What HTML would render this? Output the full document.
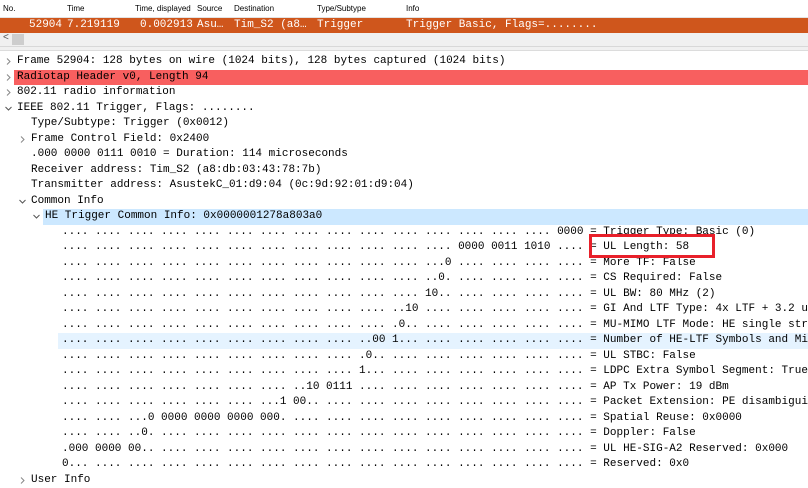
<!DOCTYPE html>
<html><head><meta charset="utf-8"><style>
body{margin:0;width:808px;height:488px;overflow:hidden;background:#fff;position:relative;font-family:"Liberation Mono",monospace;font-size:11px;color:#000}
.hdr{position:absolute;top:0;left:0;width:808px;height:17px;background:#fff;border-bottom:1px solid #e3e3e3;font-family:"Liberation Sans",sans-serif;font-size:8px}
.hdr span{position:absolute;top:4px}
.sel{position:absolute;top:18px;left:0;width:808px;height:15px;background:#cf561c;color:#fff;white-space:pre;line-height:15px}
.sel span{position:absolute;top:0}
.sb{position:absolute;top:33px;left:0;width:808px;height:13px;background:#f0f0f0;border-bottom:1px solid #d8d8d8}
.sep{position:absolute;top:47px;left:0;width:808px;height:3px;background:#f0f0f0;border-bottom:1px solid #dcdcdc}
.tree{position:absolute;top:54px;left:0;width:808px}
.r{position:relative;height:15.5px;line-height:15.5px;white-space:pre;overflow:hidden}
.a{position:absolute;top:4px;width:7px;height:7px}
.t{position:absolute;top:0}
.red{background:#f85f5f}
.blue{background:#cce8ff}
.hov{background:#e5f3ff}
.box{position:absolute;left:589px;top:234px;width:120px;height:18px;border:3px solid #e8202a}
</style></head><body>
<div class="hdr"><span style="left:3px">No.</span><span style="left:67px">Time</span><span style="left:135px">Time, displayed</span><span style="left:197px">Source</span><span style="left:234px">Destination</span><span style="left:317px">Type/Subtype</span><span style="left:406px">Info</span></div>
<div class="sel"><span style="left:29px">52904</span><span style="left:67px">7.219119</span><span style="left:140px">0.002913</span><span style="left:197px">Asu…</span><span style="left:234px">Tim_S2 (a8…</span><span style="left:317px">Trigger</span><span style="left:406px">Trigger Basic, Flags=........</span></div>
<div class="sb"><span style="position:absolute;left:3px;top:-1px;font-family:'Liberation Sans',sans-serif;font-size:10px;color:#555">&lt;</span><div style="position:absolute;left:12px;top:1px;width:12px;height:11px;background:#cdcdcd"></div></div>
<div class="sep"></div>
<div class="tree">
<div class="r"><svg class="a" style="left:5px" viewBox="0 0 7 7"><path d="M2 0.5L5 3.5L2 6.5" fill="none" stroke="#888" stroke-width="1"/></svg><span class="t" style="left:17px">Frame 52904: 128 bytes on wire (1024 bits), 128 bytes captured (1024 bits)</span></div>
<div class="r"><svg class="a" style="left:5px" viewBox="0 0 7 7"><path d="M2 0.5L5 3.5L2 6.5" fill="none" stroke="#888" stroke-width="1"/></svg><div class="red" style="position:absolute;left:14px;right:0;top:0;bottom:0"></div><span class="t" style="left:17px">Radiotap Header v0, Length 94</span></div>
<div class="r"><svg class="a" style="left:5px" viewBox="0 0 7 7"><path d="M2 0.5L5 3.5L2 6.5" fill="none" stroke="#888" stroke-width="1"/></svg><span class="t" style="left:17px">802.11 radio information</span></div>
<div class="r"><svg class="a" style="left:5px" viewBox="0 0 7 7"><path d="M0.5 2L3.5 5L6.5 2" fill="none" stroke="#555" stroke-width="1"/></svg><span class="t" style="left:17px">IEEE 802.11 Trigger, Flags: ........</span></div>
<div class="r"><span class="t" style="left:31px">Type/Subtype: Trigger (0x0012)</span></div>
<div class="r"><svg class="a" style="left:19px" viewBox="0 0 7 7"><path d="M2 0.5L5 3.5L2 6.5" fill="none" stroke="#888" stroke-width="1"/></svg><span class="t" style="left:31px">Frame Control Field: 0x2400</span></div>
<div class="r"><span class="t" style="left:31px">.000 0000 0111 0010 = Duration: 114 microseconds</span></div>
<div class="r"><span class="t" style="left:31px">Receiver address: Tim_S2 (a8:db:03:43:78:7b)</span></div>
<div class="r"><span class="t" style="left:31px">Transmitter address: AsustekC_01:d9:04 (0c:9d:92:01:d9:04)</span></div>
<div class="r"><svg class="a" style="left:19px" viewBox="0 0 7 7"><path d="M0.5 2L3.5 5L6.5 2" fill="none" stroke="#555" stroke-width="1"/></svg><span class="t" style="left:31px">Common Info</span></div>
<div class="r"><div class="blue" style="position:absolute;left:43px;right:0;top:0;bottom:0"></div><svg class="a" style="left:33px" viewBox="0 0 7 7"><path d="M0.5 2L3.5 5L6.5 2" fill="none" stroke="#555" stroke-width="1"/></svg><span class="t" style="left:45px">HE Trigger Common Info: 0x0000001278a803a0</span></div>
<div class="r"><span class="t" style="left:62px">.... .... .... .... .... .... .... .... .... .... .... .... .... .... .... 0000 = Trigger Type: Basic (0)</span></div>
<div class="r"><span class="t" style="left:62px">.... .... .... .... .... .... .... .... .... .... .... .... 0000 0011 1010 .... = UL Length: 58</span></div>
<div class="r"><span class="t" style="left:62px">.... .... .... .... .... .... .... .... .... .... .... ...0 .... .... .... .... = More TF: False</span></div>
<div class="r"><span class="t" style="left:62px">.... .... .... .... .... .... .... .... .... .... .... ..0. .... .... .... .... = CS Required: False</span></div>
<div class="r"><span class="t" style="left:62px">.... .... .... .... .... .... .... .... .... .... .... 10.. .... .... .... .... = UL BW: 80 MHz (2)</span></div>
<div class="r"><span class="t" style="left:62px">.... .... .... .... .... .... .... .... .... .... ..10 .... .... .... .... .... = GI And LTF Type: 4x LTF + 3.2 us GI (2)</span></div>
<div class="r"><span class="t" style="left:62px">.... .... .... .... .... .... .... .... .... .... .0.. .... .... .... .... .... = MU-MIMO LTF Mode: HE single stream pilot</span></div>
<div class="r"><div class="hov" style="position:absolute;left:58px;right:0;top:0;bottom:0"></div><span class="t" style="left:62px">.... .... .... .... .... .... .... .... .... ..00 1... .... .... .... .... .... = Number of HE-LTF Symbols and Mid-amble</span></div>
<div class="r"><span class="t" style="left:62px">.... .... .... .... .... .... .... .... .... .0.. .... .... .... .... .... .... = UL STBC: False</span></div>
<div class="r"><span class="t" style="left:62px">.... .... .... .... .... .... .... .... .... 1... .... .... .... .... .... .... = LDPC Extra Symbol Segment: True</span></div>
<div class="r"><span class="t" style="left:62px">.... .... .... .... .... .... .... ..10 0111 .... .... .... .... .... .... .... = AP Tx Power: 19 dBm</span></div>
<div class="r"><span class="t" style="left:62px">.... .... .... .... .... .... ...1 00.. .... .... .... .... .... .... .... .... = Packet Extension: PE disambiguity</span></div>
<div class="r"><span class="t" style="left:62px">.... .... ...0 0000 0000 0000 000. .... .... .... .... .... .... .... .... .... = Spatial Reuse: 0x0000</span></div>
<div class="r"><span class="t" style="left:62px">.... .... ..0. .... .... .... .... .... .... .... .... .... .... .... .... .... = Doppler: False</span></div>
<div class="r"><span class="t" style="left:62px">.000 0000 00.. .... .... .... .... .... .... .... .... .... .... .... .... .... = UL HE-SIG-A2 Reserved: 0x000</span></div>
<div class="r"><span class="t" style="left:62px">0... .... .... .... .... .... .... .... .... .... .... .... .... .... .... .... = Reserved: 0x0</span></div>
<div class="r"><svg class="a" style="left:19px" viewBox="0 0 7 7"><path d="M2 0.5L5 3.5L2 6.5" fill="none" stroke="#888" stroke-width="1"/></svg><span class="t" style="left:31px">User Info</span></div>
</div>
<div class="box"></div>
</body></html>
